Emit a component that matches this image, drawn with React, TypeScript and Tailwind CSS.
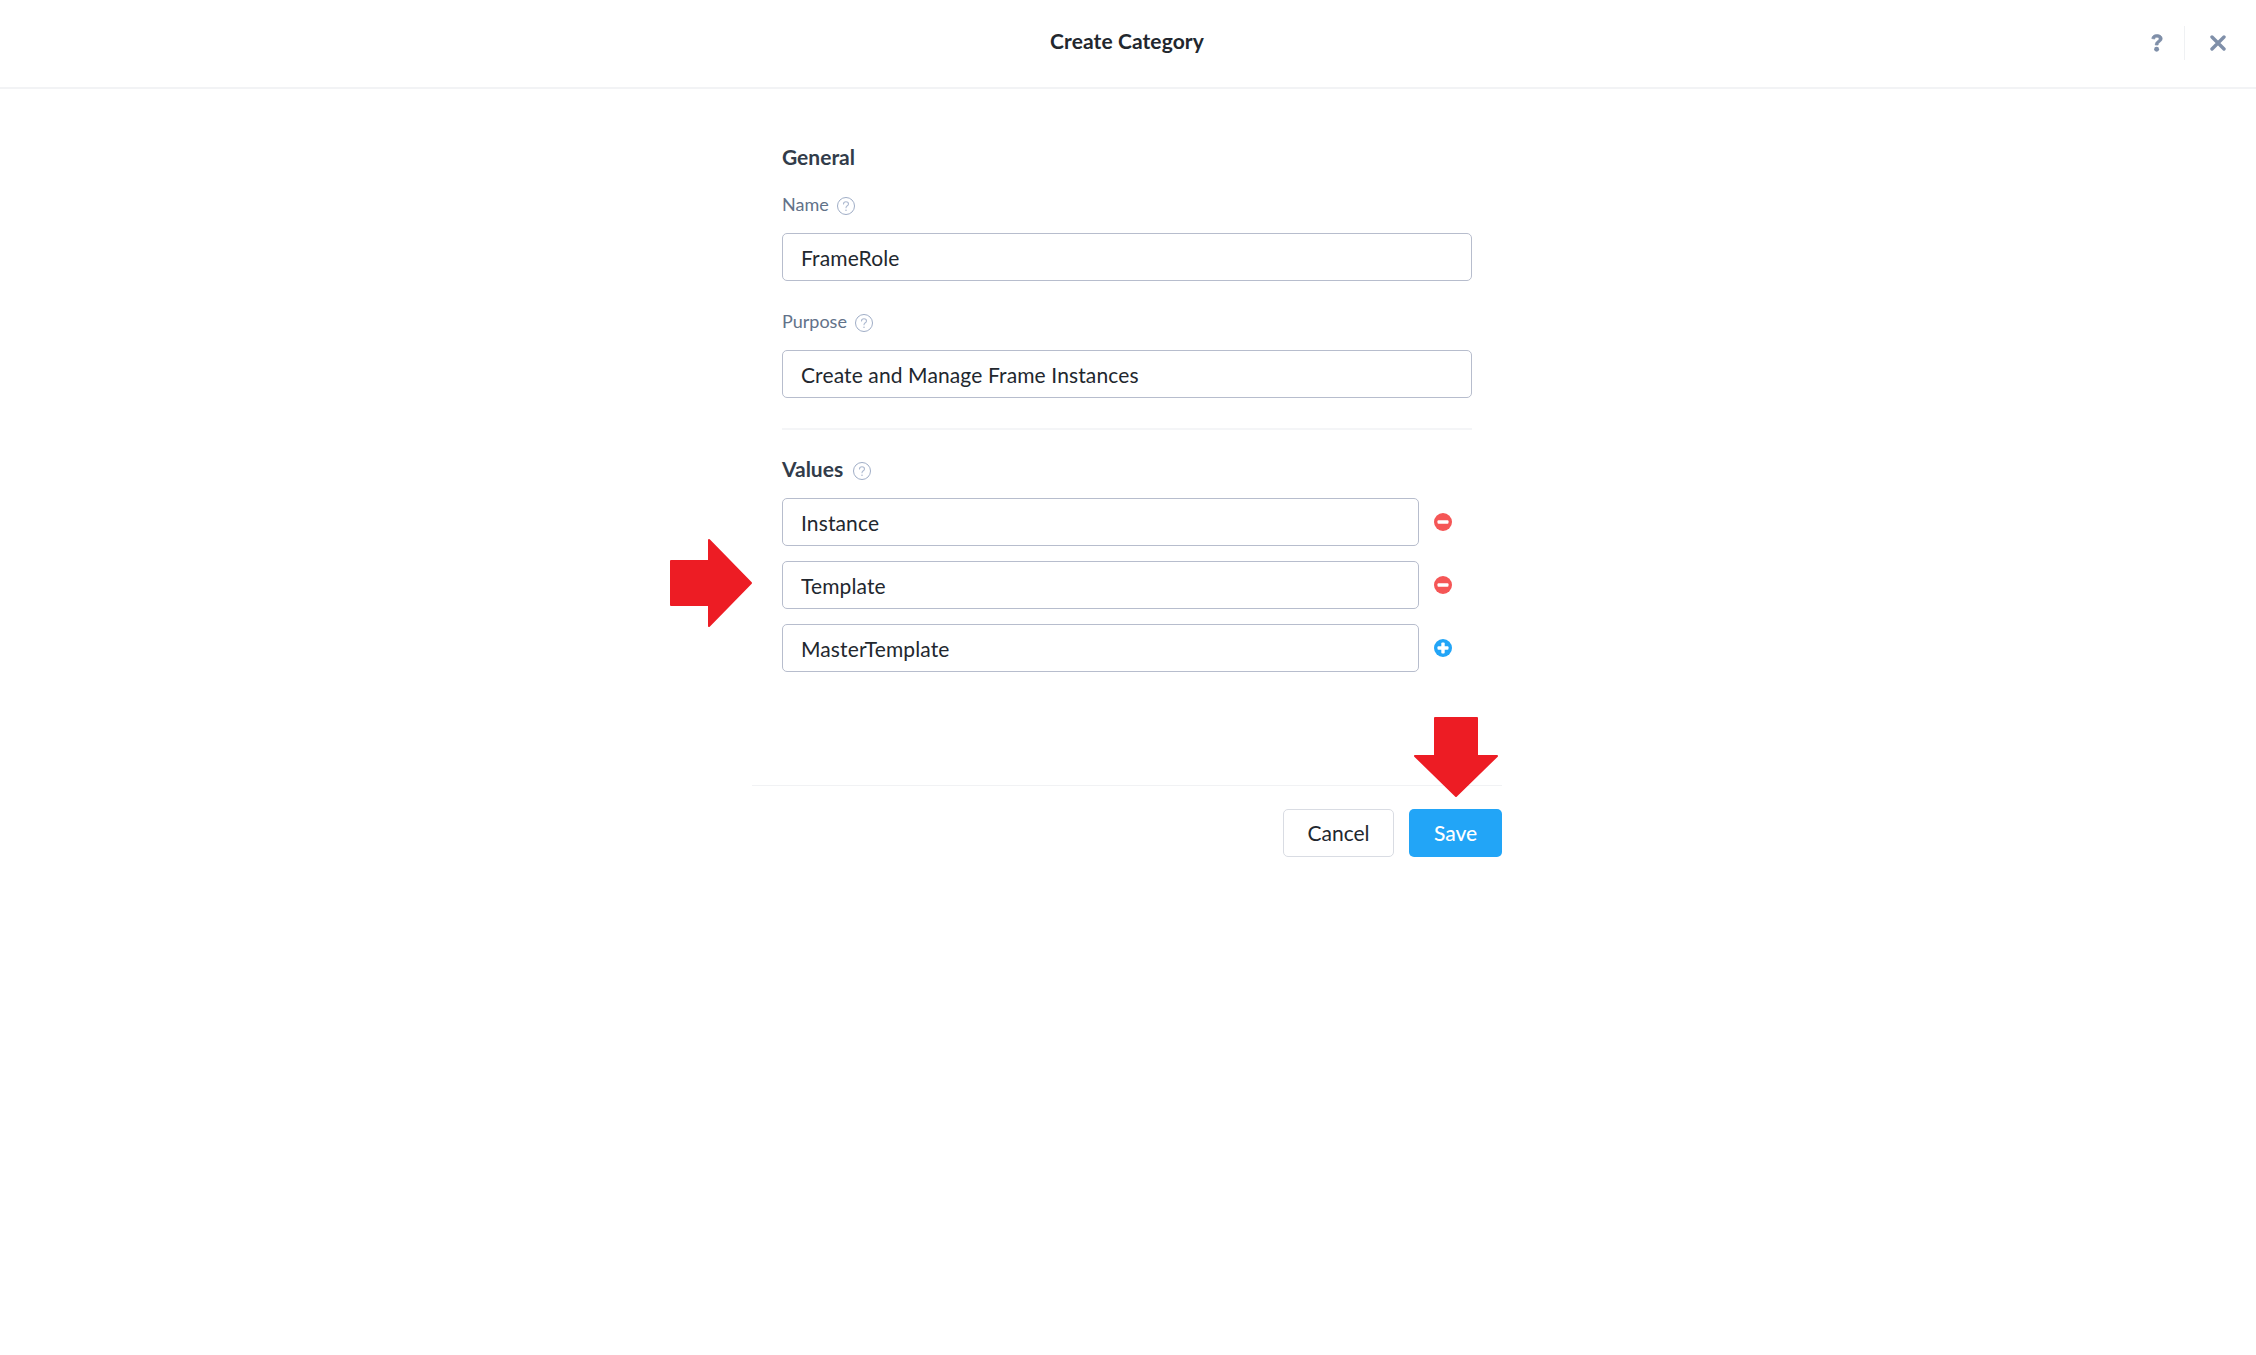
function HelpDot({ className = "" }: { className?: string }) {
  return (
    <svg width="18" height="18" viewBox="0 0 18 18" fill="none" className={`shrink-0 ${className}`}>
      <circle cx="9" cy="9" r="8.500" stroke="#9fadc6" strokeWidth="1" />
      <path d="M6.500 7c0-1.400 1.100-2.300 2.500-2.300s2.500.9 2.500 2.200c0 1.900-2.500 1.900-2.500 3.800" stroke="#aebad0" strokeWidth="1.100" strokeLinecap="round" />
      <circle cx="9" cy="13.300" r=".8" fill="#aebad0" />
    </svg>
  );
}

function Field({ value, className }: { value: string; className: string }) {
  return (
    <input
      readOnly
      value={value}
      className={`h-12 rounded-[5px] border border-[#b7bdcd] bg-white pl-[18px] pr-3 text-[21px] tracking-[0.12px] text-[#22272e] outline-none ${className}`}
    />
  );
}

function RoundIcon({ plus }: { plus?: boolean }) {
  return (
    <svg width="18" height="18" viewBox="0 0 18 18" className="ml-[15px] shrink-0">
      <circle cx="9" cy="9" r="9" fill={plus ? "#22a5f7" : "#f55656"} />
      <rect x="3.500" y="7.300" width="11" height="3.400" rx="1" fill="#fff" />
      {plus && <rect x="7.300" y="3.500" width="3.400" height="11" rx="1" fill="#fff" />}
    </svg>
  );
}

function ValueRow({ value, plus }: { value: string; plus?: boolean }) {
  return (
    <div className="flex items-center">
      <Field value={value} className="w-[637px]" />
      <RoundIcon plus={plus} />
    </div>
  );
}

export default function App() {
  return (
    <div className="relative h-[1355px] w-full bg-white font-['Lato','Liberation_Sans',sans-serif] text-[#22272e]">
      <header className="relative flex h-[89px] items-center justify-center border-b-2 border-[#f2f3f5]">
        <h1 className="-mt-[5px] pr-[2px] text-[21px] font-bold tracking-[0.1px] text-[#22272e]">Create Category</h1>
        <div className="absolute right-[30px] top-[26px] flex h-[34px] items-center">
          <svg width="12" height="18" viewBox="1.500 1.300 10.700 16" className="mr-[21px]">
            <path d="M2.200 5.300C2.400 3 4.300 1.800 6.700 1.800c2.700 0 4.800 1.300 4.800 3.700 0 3-3.700 3-3.700 5.600H5.300c0-3.700 3.400-3.700 3.400-5.500 0-.9-.8-1.400-2-1.400-1.100 0-1.800.6-1.900 1.600z" fill="#7f8fa9" stroke="#7f8fa9" strokeWidth=".6" />
            <circle cx="6.500" cy="14.800" r="2.200" fill="#7f8fa9" />
          </svg>
          <div className="h-[34px] w-px bg-[#eff1f3]" />
          <svg width="16" height="16" viewBox="0 0 16 16" className="ml-[25px]">
            <path d="M2 2l12 12M14 2L2 14" stroke="#7f8fa9" strokeWidth="3.400" strokeLinecap="round" />
          </svg>
        </div>
      </header>

      <main className="flex justify-center pr-[2px]">
        <div className="w-[750px]">
          <form className="px-[30px] pt-[55px]">
            <h2 className="text-[21px] font-bold leading-[26px] text-[#323c4a]">General</h2>

            <div className="mt-[22px] flex h-6 items-center gap-2 text-[18px] text-[#627289]">
              <span>Name</span>
              <HelpDot className="mt-[3px]" />
            </div>
            <Field value="FrameRole" className="mt-[17px] block w-full" />

            <div className="mt-[28px] flex h-6 items-center gap-2 text-[18px] text-[#627289]">
              <span>Purpose</span>
              <HelpDot className="mt-[3px]" />
            </div>
            <Field value="Create and Manage Frame Instances" className="mt-[17px] block w-full" />

            <div className="mt-[30px] border-t-2 border-[#f4f5f7]" />

            <div className="mt-[25px] flex h-7 items-center gap-[10px]">
              <h2 className="text-[21px] font-bold text-[#323c4a]">Values</h2>
              <HelpDot className="mt-[3px]" />
            </div>

            <div className="mt-[15px] flex flex-col gap-[15px]">
              <ValueRow value="Instance" />
              <ValueRow value="Template" />
              <ValueRow value="MasterTemplate" plus />
            </div>
          </form>

          <footer className="mt-[113px] flex justify-end gap-[15px] border-t border-[#f1f2f4] pt-[23px]">
            <button className="h-12 w-[111px] rounded-[5px] border border-[#d9dce3] bg-white text-[21px] text-[#22272e]">Cancel</button>
            <button className="h-12 w-[93px] rounded-[5px] bg-[#22a5f7] text-[21px] font-medium text-white">Save</button>
          </footer>
        </div>
      </main>

      <svg width="84" height="90" viewBox="0 0 84 90" className="absolute left-[669px] top-[538px]">
        <path d="M2 23H40V2L82 45 40 88V67H2Z" fill="#ed1c24" stroke="#ed1c24" strokeWidth="2" strokeLinejoin="round" />
      </svg>
      <svg width="86" height="82" viewBox="0 0 86 82" className="absolute left-[1413px] top-[716px]">
        <path d="M22 2H64V40H84L43 80 2 40H22Z" fill="#ed1c24" stroke="#ed1c24" strokeWidth="2" strokeLinejoin="round" />
      </svg>
    </div>
  );
}
